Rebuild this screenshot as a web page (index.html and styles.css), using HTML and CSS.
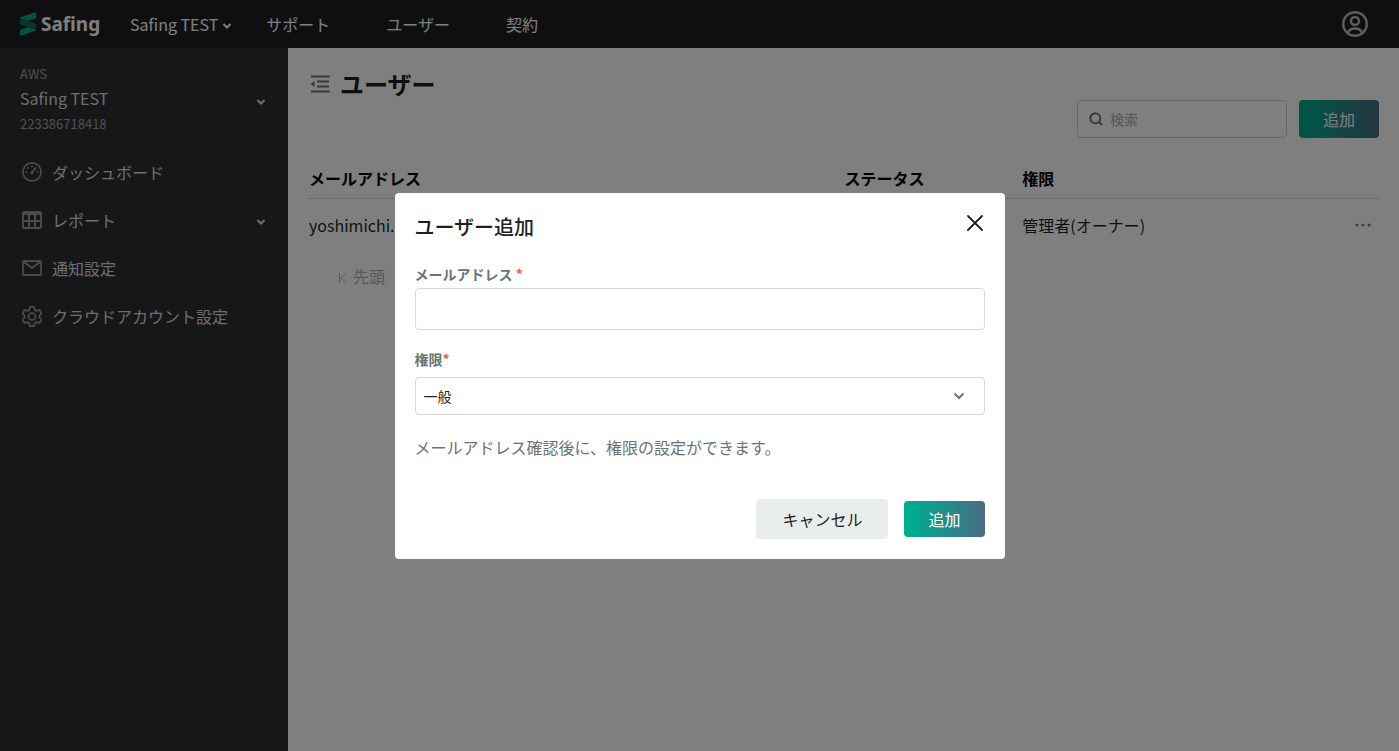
FILE: index.html
```html
<!DOCTYPE html>
<html lang="ja">
<head>
<meta charset="utf-8">
<meta name="viewport" content="width=device-width, initial-scale=1">
<title>Safing</title>
<link rel="stylesheet" href="styles.css">
</head>
<body>
<div class="app">
  <header class="topbar">
    <a class="logo" href="#">
      <svg class="logo-mark" viewBox="0 0 16 24" width="16" height="24" aria-hidden="true">
        <path d="M0 5.500L16 0V6L0 11.500Z" fill="#00a88d"/>
        <path d="M0 18L16 12.500V18.500L0 24Z" fill="#00a88d"/>
        <path d="M0 5.500L16 12V18.500L0 12Z" fill="#1b6b4e"/>
      </svg>
      <span>Safing</span>
    </a>
    <nav class="nav">
      <button class="nav-org" type="button">Safing TEST
        <svg class="caret" viewBox="0 0 10 8" width="10" height="8" fill="none" stroke="currentColor" stroke-width="2" aria-hidden="true"><path d="M1.500 2L5 5.500L8.500 2"/></svg>
      </button>
      <a href="#">サポート</a>
      <a href="#">ユーザー</a>
      <a href="#">契約</a>
    </nav>
    <button class="account" type="button" aria-label="アカウント">
      <svg viewBox="0 0 26 26" width="26" height="26" fill="none" stroke="currentColor" stroke-width="2.400" aria-hidden="true"><circle cx="13" cy="13" r="11.800"/><circle cx="13" cy="10" r="4"/><path d="M6 22C7 18.500 9.500 17.500 13 17.500S19 18.500 20 22"/></svg>
    </button>
  </header>
  <div class="body">
    <aside class="sidebar">
      <button class="project" type="button">
        <span class="project-text">
          <span class="project-meta">AWS</span>
          <span class="project-name">Safing TEST</span>
          <span class="project-meta">223386718418</span>
        </span>
        <svg class="project-caret" viewBox="0 0 10 8" width="10" height="8" fill="none" stroke="currentColor" stroke-width="2" aria-hidden="true"><path d="M1.500 2L5 5.500L8.500 2"/></svg>
      </button>
      <nav class="menu">
        <a href="#">
          <svg class="menu-icon" viewBox="0 0 20 20" width="20" height="20" fill="none" stroke="currentColor" stroke-width="1.700" aria-hidden="true"><circle cx="10" cy="10" r="9.100"/><path d="M9.800 10.800L14 5.500" stroke-width="1.800"/><circle cx="9.800" cy="10.800" r="1.500" fill="currentColor" stroke="none"/><g fill="currentColor" stroke="none"><circle cx="4.500" cy="10" r="1"/><circle cx="6" cy="6" r="1"/><circle cx="10" cy="4.500" r="1"/><circle cx="15.500" cy="10" r="1"/></g></svg>
          <span>ダッシュボード</span>
        </a>
        <a href="#">
          <svg class="menu-icon" viewBox="0 0 20 20" width="20" height="20" fill="none" stroke="currentColor" stroke-width="2" aria-hidden="true"><rect x="1" y="2" width="18" height="16" rx="1"/><path d="M1 4H19"/><path d="M1 11H19M7 3V18M13 3V18"/></svg>
          <span>レポート</span>
          <svg class="caret menu-caret" viewBox="0 0 10 8" width="10" height="8" fill="none" stroke="currentColor" stroke-width="2" aria-hidden="true"><path d="M1.500 2L5 5.500L8.500 2"/></svg>
        </a>
        <a href="#">
          <svg class="menu-icon" viewBox="0 0 20 20" width="20" height="20" fill="none" stroke="currentColor" stroke-width="1.800" aria-hidden="true"><rect x="1" y="3" width="18" height="14" rx="1"/><path d="M1.500 3.500L10 10L18.500 3.500"/></svg>
          <span>通知設定</span>
        </a>
        <a href="#">
          <svg class="menu-icon" viewBox="2 1.500 20 21" width="20" height="21" fill="none" stroke="currentColor" stroke-width="1.700" stroke-linejoin="round" aria-hidden="true"><circle cx="12" cy="12" r="3.500"/><path d="M10 2.300H14L14.700 5.200L16.700 6.400L19.500 5.500L21.500 9L19.400 11V13L21.500 15L19.500 18.500L16.700 17.600L14.700 18.800L14 21.700H10L9.300 18.800L7.300 17.600L4.500 18.500L2.500 15L4.600 13V11L2.500 9L4.500 5.500L7.300 6.400L9.300 5.200Z"/></svg>
          <span>クラウドアカウント設定</span>
        </a>
      </nav>
    </aside>
    <main class="content">
      <div class="heading">
        <button class="collapse" type="button" aria-label="メニューを閉じる">
          <svg viewBox="0 0 20 18" width="20" height="18" fill="none" stroke="currentColor" stroke-width="1.800" aria-hidden="true"><path d="M1 1.500H19.500M7 6.500H19M7 11.500H19M1 16.500H19.500"/><path d="M.5 9L4.500 6V12Z" fill="currentColor" stroke="none"/></svg>
        </button>
        <h1>ユーザー</h1>
      </div>
      <div class="tools">
        <label class="search">
          <svg viewBox="0 0 14 14" width="14" height="14" fill="none" stroke="currentColor" stroke-width="1.900" aria-hidden="true"><circle cx="6.300" cy="6.300" r="5"/><path d="M10 10L13 13"/></svg>
          <input type="search" placeholder="検索" aria-label="検索">
        </label>
        <button class="btn btn-primary" type="button">追加</button>
      </div>
      <table class="users">
        <thead>
          <tr><th class="col-mail">メールアドレス</th><th class="col-status">ステータス</th><th>権限</th><th class="col-more"></th></tr>
        </thead>
        <tbody>
          <tr>
            <td>yoshimichi.</td><td></td><td>管理者(オーナー)</td>
            <td class="col-more"><button class="more" type="button" aria-label="操作"><svg viewBox="0 0 16 4" width="16" height="4" fill="currentColor" aria-hidden="true"><circle cx="2" cy="2" r="1.500"/><circle cx="8" cy="2" r="1.500"/><circle cx="14" cy="2" r="1.500"/></svg></button></td>
          </tr>
        </tbody>
      </table>
      <div class="pager">
        <button type="button" disabled>
          <svg viewBox="0 0 8 10" width="8" height="10" fill="none" stroke="currentColor" aria-hidden="true"><path d="M1.500 0V10M7.500 .5L3 5L7.500 9.500"/></svg>
          先頭
        </button>
      </div>
    </main>
  </div>
</div>
<div class="overlay">
  <form class="modal" role="dialog" aria-modal="true" aria-labelledby="modal-title">
    <div class="modal-head">
      <h2 id="modal-title">ユーザー追加</h2>
      <button class="close" type="button" aria-label="閉じる">
        <svg viewBox="0 0 16 16" width="16" height="16" fill="none" stroke="currentColor" stroke-width="1.800" stroke-linecap="round" aria-hidden="true"><path d="M1 1L15 15M15 1L1 15"/></svg>
      </button>
    </div>
    <label class="label" for="mail">メールアドレス <span class="required">*</span></label>
    <input class="field field-mail" id="mail" type="email">
    <label class="label label-role" for="role">権限<span class="required">*</span></label>
    <div class="select">
      <select class="field field-role" id="role"><option>一般</option></select>
      <svg viewBox="0 0 12 8" width="12" height="8" fill="none" stroke="currentColor" stroke-width="2" aria-hidden="true"><path d="M1.500 1.500L6 6L10.500 1.500"/></svg>
    </div>
    <p class="note">メールアドレス確認後に、権限の設定ができます。</p>
    <div class="actions">
      <button class="btn btn-cancel" type="button">キャンセル</button>
      <button class="btn btn-primary btn-submit" type="submit">追加</button>
    </div>
  </form>
</div>
</body>
</html>
```
FILE: styles.css
```css
* { box-sizing: border-box; }
body {
  margin: 0;
  font: 16px/24px "Noto Sans CJK JP", sans-serif;
  color: #000;
  background: #fff;
}
button, input, select { font: inherit; color: inherit; }
button { padding: 0; border: 0; background: none; cursor: pointer; }
a { color: inherit; text-decoration: none; }
svg { display: block; flex: none; }
h1, h2, p { margin: 0; }

.app { display: flex; flex-direction: column; min-height: 100vh; }
.topbar {
  display: flex;
  align-items: center;
  height: 48px;
  padding: 0 31px 0 20px;
  background: #1f1f23;
  color: #fff;
}
.logo {
  display: flex;
  align-items: center;
  gap: 5px;
  width: 110px;
  font: 700 19px/24px "Noto Sans", sans-serif;
}
.nav { display: flex; flex: 1; align-items: center; gap: 56px; }
.nav-org { display: flex; align-items: center; gap: 4px; margin-right: -22px; }
.caret { margin-top: 3px; }
.account { color: #bbb; }

.body { display: flex; flex: 1; }
.sidebar { width: 288px; flex: none; background: #2e2e32; color: #ddd; }
.project {
  display: flex;
  align-items: center;
  justify-content: space-between;
  width: 100%;
  padding: 14px 22px 12px 20px;
  text-align: left;
}
.project-text { display: flex; flex-direction: column; }
.project-name { margin-bottom: 2px; }
.project-meta { font-size: 13px; color: #a0a0a2; }
.project-caret { margin-top: 6px; }
.menu a { display: flex; align-items: center; gap: 10px; height: 48px; padding: 0 22px; }
.menu-icon { color: #959597; }
.menu-caret { margin-left: auto; }

.content { flex: 1; min-width: 0; padding: 18px 20px; }
.heading { display: flex; align-items: center; gap: 10px; padding-left: 2px; height: 36px; }
.collapse { color: #6b7472; }
h1 { font-size: 24px; line-height: 36px; color: #1f1f23; }
.tools { display: flex; justify-content: flex-end; gap: 12px; margin-top: -2px; }
.search {
  display: flex;
  align-items: center;
  gap: 7px;
  width: 210px;
  height: 38px;
  padding: 0 11px;
  border: 1px solid #d0d0d4;
  border-radius: 4px;
  color: #6b7472;
}
.search input { flex: 1; min-width: 0; padding: 0; border: 0; outline: 0; background: none; font-size: 14px; }
.search input::placeholder { color: #a9a9b5; }
.btn { height: 38px; padding: 0 24px; border-radius: 4px; }
.btn-primary { background: linear-gradient(90deg, #00ab8e 10%, #496b83); color: #fff; }

.users { width: 100%; margin-top: 20px; border-collapse: collapse; table-layout: fixed; }
.users th, .users td { padding: 8px 1px; text-align: left; }
.users th { border-bottom: 1px solid #d8d8dc; }
.users td { padding: 13px 1px 15px; color: #1f1f23; }
.col-mail { width: 50%; }
.col-status { width: 16.6%; }
.users .col-more { width: 60px; padding-right: 8px; text-align: right; }
.more { height: 26px; vertical-align: top; color: #777; }
.pager { display: flex; padding: 11px 30px; }
.pager button { display: flex; align-items: center; gap: 7px; color: #a6b5b0; }
.pager svg { margin-top: 3px; }

.overlay {
  position: fixed;
  inset: 0;
  display: flex;
  align-items: center;
  justify-content: center;
  background: rgba(0, 0, 0, .5);
}
.modal {
  display: flex;
  flex-direction: column;
  width: 610px;
  max-width: 100%;
  padding: 20px;
  border-radius: 4px;
  background: #fff;
  color: #1f1f23;
}
.modal-head { display: flex; align-items: flex-start; justify-content: space-between; margin-bottom: 23px; }
h2 { font-size: 20px; line-height: 28px; font-weight: 500; }
.close { padding: 2px; }
.label { font-size: 14px; line-height: 20px; font-weight: 700; color: #6b7472; }
.label-role { margin: 19px 0 8px; }
.required { color: #e9613c; }
.field {
  width: 100%;
  padding: 0 8px;
  border: 1px solid #d5dbda;
  border-radius: 4px;
  background: #fff;
  font-size: 14px;
}
.field-mail { height: 42px; margin-top: 4px; }
.select { display: grid; align-items: center; color: #6b7472; }
.select > * { grid-area: 1 / 1; }
.select svg { justify-self: end; margin-right: 20px; pointer-events: none; }
.field-role { height: 38px; appearance: none; color: #1f1f23; }
.note { margin: 20px 0 40px; color: #6b7472; }
.actions { display: flex; align-items: center; justify-content: flex-end; gap: 16px; }
.btn-cancel { height: 40px; padding: 0 26px; background: #e9edec; }
.btn-submit { height: 36px; }
```
